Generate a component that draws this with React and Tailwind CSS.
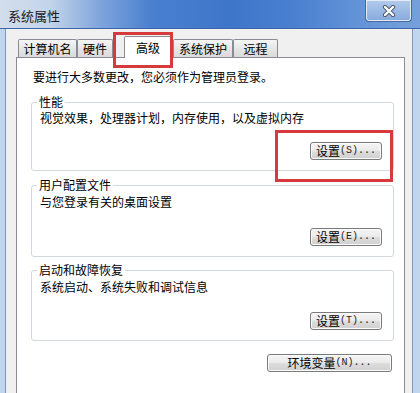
import React from "react";

const FONT = "font-['Noto_Sans_CJK_SC','Liberation_Sans',sans-serif]";

const Ascii = ({ children }) => (
  <span className="font-['Liberation_Mono',monospace] text-[10px] text-[#222]">{children}</span>
);

const Btn = ({ label, hot, w = "w-[72px]" }) => (
  <button
    className={`${w} h-[18px] rounded-[3px] border border-[#7a7a7a] bg-[linear-gradient(#f4f4f4,#ececec_45%,#dcdcdc_55%,#d0d0d0)] shadow-[inset_0_0_0_1px_#fbfbfb] flex items-center justify-center text-[12px] leading-[14px] text-black`}
  >
    {label}
    <Ascii>({hot})...</Ascii>
  </button>
);

const Tab = ({ label, w, active, ml = "" }) =>
  active ? (
    <div
      className={`${w} ${ml} h-[22px] -mb-px relative z-10 bg-white border-t border-l border-r border-[#898c95] rounded-t-[2px] flex items-center justify-center text-[12px] leading-[14px]`}
    >
      {label}
    </div>
  ) : (
    <div
      className={`${w} ${ml} h-[18px] bg-[linear-gradient(#f6f6f6,#e6e6e6_50%,#dadada)] border-t border-l border-r border-[#898c95] rounded-t-[2px] flex items-center justify-center pt-[1px] text-[12px] leading-[14px]`}
    >
      {label}
    </div>
  );

const Group = ({ title, desc, hot, mt, descMt, btnMt }) => (
  <fieldset className={`${mt} border border-[#d3d8dd] rounded-[3px] pl-[8px] pr-[11px] pb-[10px]`}>
    <legend className="-ml-[3px] px-[2px] text-[12px] leading-[14px]">{title}</legend>
    <div className={`${descMt} text-[12px] leading-[14px]`}>{desc}</div>
    <div className={`${btnMt} flex justify-end`}>
      <Btn label="设置" hot={hot} />
    </div>
  </fieldset>
);

export default function App() {
  return (
    <div className={`relative w-[420px] h-[393px] overflow-hidden flex flex-col bg-[#c0d6ee] text-black ${FONT}`}>
      {/* title bar */}
      <div className="h-[29px] flex-none flex items-start justify-between border-b border-[#3d66aa] bg-[linear-gradient(90deg,#d3deeb_0%,#c3d4ea_12%,#7ea4dc_24%,#4a80cf_36%,#3e76ca_55%,#4a80cf_70%,#6393d7_85%,#76a0db_100%)]">
        <div className="pl-[8px] pt-[8px] text-[13px] leading-[15px] text-[#1b1b1b]">系统属性</div>
        <div className="mr-[8px] w-[47px] h-[22px] rounded-b-[4px] border border-t-0 border-[#46689f] shadow-[inset_0_0_0_1px_#e4ecf8] bg-[linear-gradient(#b3cbec,#86a9de)] flex items-center justify-center">
          <svg width="14" height="12" viewBox="0 0 14 12">
            <path d="M3 2 L11 10 M11 2 L3 10" stroke="#4a5566" strokeWidth="4.2" strokeLinecap="round" />
            <path d="M3 2 L11 10 M11 2 L3 10" stroke="#ffffff" strokeWidth="2.4" strokeLinecap="round" />
          </svg>
        </div>
      </div>

      {/* window body */}
      <div className="flex-1 min-h-0 pl-[5px] pr-[7px]">
        <div className="h-full flex flex-col border-l border-r border-[#8497ae] bg-[#f0f0f0] pl-[10px] pr-[7px] pt-[7px]">
          <div className="h-[21px] flex items-end pl-[2px]">
            <Tab label="计算机名" w="w-[59px]" />
            <Tab label="硬件" w="w-[36px]" />
            <Tab label="高级" w="w-[48px]" ml="ml-[11px]" active />
            <Tab label="系统保护" w="w-[60px]" ml="ml-[1px]" />
            <Tab label="远程" w="w-[45px]" />
          </div>

          <div className="flex-1 bg-white border border-b-0 border-[#898c95] pl-[14px] pr-[10px] pt-[12px]">
            <div className="ml-[2px] text-[12px] leading-[14px]">要进行大多数更改，您必须作为管理员登录。</div>

            <Group
              title="性能"
              desc="视觉效果，处理器计划，内存使用，以及虚拟内存"
              hot="S"
              mt="mt-[11px]"
              descMt="mt-[2px]"
              btnMt="mt-[17px]"
            />
            <Group
              title="用户配置文件"
              desc="与您登录有关的桌面设置"
              hot="E"
              mt="mt-[7px]"
              descMt="mt-[3px]"
              btnMt="mt-[19px]"
            />
            <Group
              title="启动和故障恢复"
              desc="系统启动、系统失败和调试信息"
              hot="T"
              mt="mt-[6px]"
              descMt="mt-[3px]"
              btnMt="mt-[18px]"
            />

            <div className="mt-[13px] mr-[2px] flex justify-end">
              <Btn label="环境变量" hot="N" w="w-[125px]" />
            </div>
          </div>
        </div>
      </div>

      {/* red highlight boxes */}
      <div className="absolute left-[113px] top-[32px] w-[60px] h-[36px] border-[3px] border-[#d63a3c] z-20" />
      <div className="absolute left-[275px] top-[130px] w-[118px] h-[52px] border-[3px] border-[#d63a3c] z-20" />
    </div>
  );
}
